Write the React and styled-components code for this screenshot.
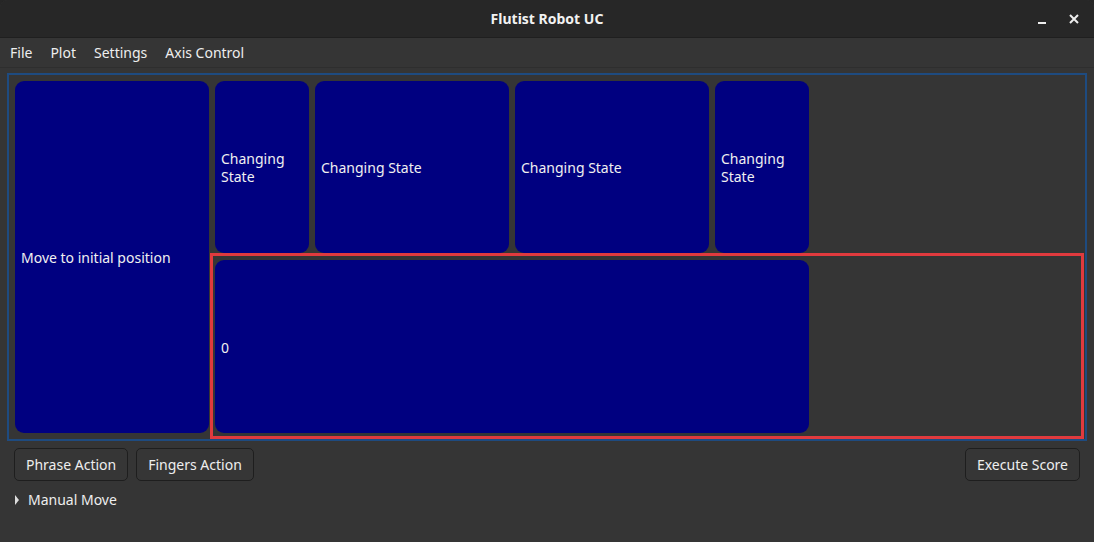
import React from "react";
import styled, { createGlobalStyle } from "styled-components";

const Global = createGlobalStyle`
  html, body { margin: 0; padding: 0; background: #262626; }
  body { font-family: "Noto Sans", "DejaVu Sans", sans-serif; }
`;

const Window = styled.div`
  width: 1094px;
  height: 542px;
  background: #353535;
  color: #eeeeee;
  display: flex;
  flex-direction: column;
  border-radius: 8px 8px 0 0;
  overflow: hidden;
`;

const TitleBar = styled.div`
  height: 38px;
  box-sizing: border-box;
  background: #272727;
  border-bottom: 1px solid #1f1f1f;
  position: relative;
  display: flex;
  align-items: center;
  justify-content: center;
  font-weight: 700;
  font-size: 14px;
  color: #f2f2f2;
`;

const Controls = styled.div`
  position: absolute;
  right: 14px;
  top: 0;
  height: 38px;
  display: flex;
  align-items: center;
  gap: 20px;
`;

const MenuBar = styled.div`
  height: 29px;
  display: flex;
  align-items: center;
  padding-left: 10px;
  font-size: 14px;
  border-bottom: 1px solid #2e2e2e;
`;

const MenuItem = styled.span`
  margin-right: 18px;
  color: #eeeeee;
`;

const Frame = styled.div`
  margin: 5px 7px 0 7px;
  border: 2px solid #1e4b80;
  height: 368px;
  box-sizing: border-box;
  display: flex;
  padding: 6px 1px 0 6px;
`;

const Tile = styled.div`
  background: #000080;
  border-radius: 9px;
  color: #f0f0f0;
  font-size: 14px;
  line-height: 18px;
  display: flex;
  align-items: center;
  padding: 2px 6px 0 6px;
  box-sizing: border-box;
  width: ${(p) => p.$w}px;
  height: ${(p) => p.$h}px;
  flex: none;
`;

const RightCol = styled.div`
  flex: 1;
  display: flex;
  flex-direction: column;
  margin-left: 1px;
`;

const TopRow = styled.div`
  display: flex;
  gap: 6px;
  padding-left: 5px;
  height: 172px;
`;

const Highlight = styled.div`
  border: 3px solid #e03a3e;
  height: 186px;
  box-sizing: border-box;
  padding: 4px 0 3px 2px;
  display: flex;
`;

const ButtonRow = styled.div`
  display: flex;
  align-items: center;
  padding: 7px 14px 0 14px;
  gap: 8px;
`;

const Button = styled.button`
  font-family: inherit;
  font-size: 14px;
  color: #eeeeee;
  background: #363636;
  border: 1px solid #1e1e1e;
  border-radius: 5px;
  height: 33px;
  padding: 0 11px;
  margin-left: ${(p) => (p.$right ? "auto" : "0")};
`;

const Expander = styled.div`
  display: flex;
  align-items: center;
  gap: 8px;
  padding: 9px 0 0 14px;
  font-size: 14px;
  color: #eeeeee;
`;

export default function App() {
  return (
    <>
      <Global />
      <Window>
        <TitleBar>
          Flutist Robot UC
          <Controls>
            <svg width="12" height="12" viewBox="0 0 12 12">
              <rect x="2" y="9" width="8" height="2" fill="#eeeeee" />
            </svg>
            <svg width="12" height="12" viewBox="0 0 12 12">
              <path d="M2 2 L10 10 M10 2 L2 10" stroke="#eeeeee" strokeWidth="2" />
            </svg>
          </Controls>
        </TitleBar>
        <MenuBar>
          <MenuItem>File</MenuItem>
          <MenuItem>Plot</MenuItem>
          <MenuItem>Settings</MenuItem>
          <MenuItem>Axis Control</MenuItem>
        </MenuBar>
        <Frame>
          <Tile $w={194} $h={352}>Move to initial position</Tile>
          <RightCol>
            <TopRow>
              <Tile $w={94} $h={172}>Changing State</Tile>
              <Tile $w={194} $h={172}>Changing State</Tile>
              <Tile $w={194} $h={172}>Changing State</Tile>
              <Tile $w={94} $h={172}>Changing State</Tile>
            </TopRow>
            <Highlight>
              <Tile $w={594} $h={173}>0</Tile>
            </Highlight>
          </RightCol>
        </Frame>
        <ButtonRow>
          <Button>Phrase Action</Button>
          <Button>Fingers Action</Button>
          <Button $right>Execute Score</Button>
        </ButtonRow>
        <Expander>
          <svg width="6" height="10" viewBox="0 0 6 10">
            <path d="M1 0 L5 5 L1 10 Z" fill="#dddddd" />
          </svg>
          Manual Move
        </Expander>
      </Window>
    </>
  );
}
